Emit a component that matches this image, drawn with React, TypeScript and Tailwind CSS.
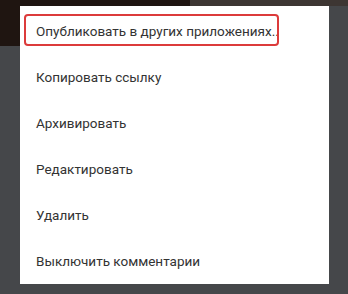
import React from "react";

const items = [
  "Опубликовать в других приложениях..",
  "Копировать ссылку",
  "Архивировать",
  "Редактировать",
  "Удалить",
  "Выключить комментарии",
];

export default function App() {
  return (
    <div className="relative w-[348px] h-[294px] overflow-hidden bg-[#45474a] pt-[6px] pl-[20px]">
      {/* dimmed photo behind the sheet */}
      <div className="absolute left-0 top-0 w-[190px] h-[46px] bg-[#1f1511]" />
      <div className="absolute left-[190px] top-0 w-[158px] h-[6px] bg-[#3d3633]" />

      <div className="relative w-[309px] h-[278px] bg-white pt-[2px] font-['Roboto',sans-serif]">
        {items.map((label, i) => (
          <div key={label} className="relative h-[46px] flex items-center pl-[16px]">
            <span className="text-[13.5px] text-[#333333] whitespace-nowrap">{label}</span>
            {i === 0 && (
              <div className="absolute left-[4px] top-[6px] w-[255px] h-[32px] rounded-[4px] border-2 border-[#dc3b3b]" />
            )}
          </div>
        ))}
      </div>
    </div>
  );
}
